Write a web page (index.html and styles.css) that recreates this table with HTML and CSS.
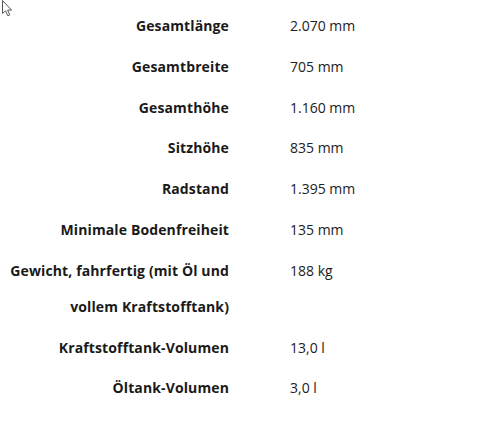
FILE: index.html
```html
<!DOCTYPE html>
<html lang="de">
<head>
<meta charset="utf-8">
<title>Technische Daten</title>
<link rel="stylesheet" href="styles.css">
</head>
<body>
<svg class="cursor" width="14" height="20" viewBox="0 0 14 20">
  <path d="M2.5 0.5 L2.5 13.5 L5.5 10.8 L7.8 15.8 L9.8 14.9 L7.6 10.1 L11.5 10.1 Z" fill="#fff" stroke="#555" stroke-width="1" stroke-linejoin="miter"/>
</svg>
<div class="specs">
  <div class="label">Gesamtlänge</div><div class="value">2.070 mm</div>
  <div class="label">Gesamtbreite</div><div class="value">705 mm</div>
  <div class="label">Gesamthöhe</div><div class="value">1.160 mm</div>
  <div class="label">Sitzhöhe</div><div class="value">835 mm</div>
  <div class="label">Radstand</div><div class="value">1.395 mm</div>
  <div class="label">Minimale Bodenfreiheit</div><div class="value">135 mm</div>
  <div class="label">Gewicht, fahrfertig (mit Öl und vollem Kraftstofftank)</div><div class="value">188 kg</div>
  <div class="label">Kraftstofftank-Volumen</div><div class="value">13,0 l</div>
  <div class="label">Öltank-Volumen</div><div class="value">3,0 l</div>
</div>
</body>
</html>
```
FILE: styles.css
```css
html, body {
  margin: 0;
  padding: 0;
  background: #fff;
}
body {
  font-family: "Open Sans", "Noto Sans", sans-serif;
  font-size: 14px;
  color: #1a1a1a;
}
.cursor {
  position: absolute;
  left: 0;
  top: 0;
}
.specs {
  display: grid;
  grid-template-columns: 229px 200px;
  column-gap: 61px;
  row-gap: 4.8px;
  padding-top: 8px;
  line-height: 36px;
}
.label {
  font-weight: 700;
  text-align: right;
  letter-spacing: 0.12px;
}
.value {
  font-weight: 400;
  color: #222;
}
```
